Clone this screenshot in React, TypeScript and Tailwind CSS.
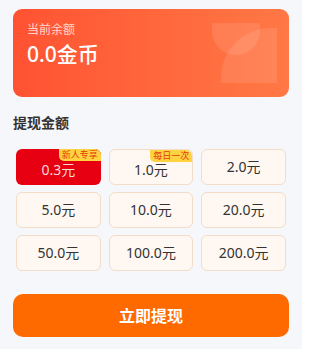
const amounts = [
  { v: '0.3元', tag: '新人专享' },
  { v: '1.0元', tag: '每日一次' },
  { v: '2.0元' },
  { v: '5.0元' },
  { v: '10.0元' },
  { v: '20.0元' },
  { v: '50.0元' },
  { v: '100.0元' },
  { v: '200.0元' },
]

export default function App() {
  const selected = 0
  return (
    <div
      className="w-[302px] h-[349px] bg-[#f6f7fb] px-[13px] pt-[9px] overflow-hidden"
      style={{ fontFamily: '"Noto Sans", "Noto Sans CJK SC", sans-serif' }}
    >
      {/* Balance card */}
      <div className="relative h-[88px] rounded-[9px] bg-gradient-to-r from-[#ff5232] to-[#ff7845] px-[14px] pt-[14px] overflow-hidden">
        <div className="absolute left-[199px] top-[14px] w-[48px] h-[32px] rounded-b-[24px] bg-white/10" />
        <div className="absolute left-[208px] top-[19px] w-[56px] h-[55px] rounded-tl-[50px] bg-white/10" />
        <div className="relative text-[12px] leading-[14px] text-white/75">当前余额</div>
        <div className="relative mt-[4px] text-[21px] leading-[26px] font-medium text-white">0.0金币</div>
      </div>

      {/* Amount */}
      <div className="mt-[17px] text-[14px] leading-[18px] font-bold text-[#333]">提现金额</div>
      <div className="mt-[17px] px-[3px] grid grid-cols-3 gap-x-[8px] gap-y-[7px]">
        {amounts.map((a, i) => (
          <div
            key={a.v}
            className={
              i === selected
                ? 'relative h-[36px] rounded-[6px] bg-[#e60012] flex items-center justify-center text-[14px] leading-[18px] text-[#f8dada]'
                : 'relative h-[36px] rounded-[6px] bg-[#fff8f2] border border-[#f3dcc8] flex items-center justify-center text-[14px] leading-[18px] text-[#333]'
            }
          >
            {a.tag && (
              <span className="absolute right-0 top-0 h-[12px] px-[3px] rounded-bl-[5px] rounded-tr-[6px] bg-[#ffd23f] text-[9px] leading-[12px] text-[#e33a0f]">
                {a.tag}
              </span>
            )}
            <span className={a.tag ? 'mt-[6px]' : ''}>{a.v}</span>
          </div>
        ))}
      </div>

      {/* Button */}
      <button className="mt-[23px] w-full h-[43px] rounded-[10px] bg-[#ff6a00] text-white text-[16px] font-bold">
        立即提现
      </button>
    </div>
  )
}
